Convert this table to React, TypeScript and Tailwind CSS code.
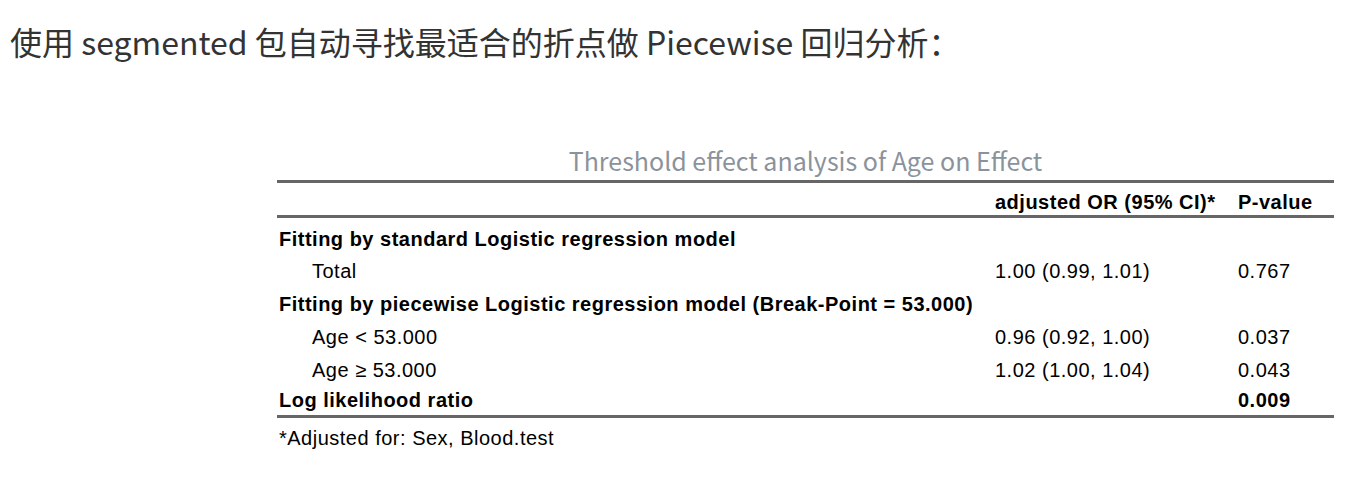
export default function App() {
  const rows = [
    { label: "Fitting by standard Logistic regression model", bold: true },
    { label: "Total", or: "1.00 (0.99, 1.01)", p: "0.767" },
    { label: "Fitting by piecewise Logistic regression model (Break-Point = 53.000)", bold: true },
    { label: "Age < 53.000", or: "0.96 (0.92, 1.00)", p: "0.037" },
    { label: "Age ≥ 53.000", or: "1.02 (1.00, 1.04)", p: "0.043" },
    { label: "Log likelihood ratio", bold: true, p: "0.009" },
  ];
  const rowH = ["h-[37px] pt-[10px] pb-[4px]", "h-[33px]", "h-[33px]", "h-[33px]", "h-[33px]", "h-[29px]"];

  return (
    <div className="w-[1360px] h-[484px] bg-white">
      {/* Heading */}
      <div className="pt-[20px] pl-[10px] text-[32px] leading-[42px] text-[#333] font-['Noto_Sans_CJK_SC',sans-serif]">
        使用 segmented 包自动寻找最适合的折点做 Piecewise 回归分析：
      </div>

      {/* Table */}
      <div className="ml-[277px] mt-[80px] w-[1057px] font-['Liberation_Sans',Arial,sans-serif] text-[20px] tracking-[0.5px] text-black">
        <div className="mb-[2px] text-center text-[25px] leading-[36px] tracking-normal text-[#8a939c] font-['Noto_Sans_CJK_SC',sans-serif]">
          Threshold effect analysis of Age on Effect
        </div>
        <table className="w-full table-fixed border-collapse leading-[23px]">
          <colgroup>
            <col className="w-[716px]" />
            <col className="w-[243px]" />
            <col className="w-[98px]" />
          </colgroup>
          <thead>
            <tr className="border-t-[3px] border-b-[3px] border-[#666] font-bold">
              <th className="h-[35px] pt-[6px] px-[2px] text-left"></th>
              <th className="h-[35px] pt-[6px] px-[2px] text-left">adjusted OR (95% CI)*</th>
              <th className="h-[35px] pt-[6px] px-[2px] text-left">P-value</th>
            </tr>
          </thead>
          <tbody className="border-b-[3px] border-[#666]">
            {rows.map((r, i) => (
              <tr key={i}>
                <td className={`${rowH[i]} ${r.bold ? "px-[2px] font-bold" : "pl-[35px] pr-[2px]"}`}>{r.label}</td>
                <td className={`${rowH[i]} px-[2px]`}>{r.or ?? ""}</td>
                <td className={`${rowH[i]} px-[2px] ${r.bold ? "font-bold" : ""}`}>{r.p ?? ""}</td>
              </tr>
            ))}
          </tbody>
        </table>
        <div className="pl-[2px] pt-[8px] leading-[24px]">*Adjusted for: Sex, Blood.test</div>
      </div>
    </div>
  );
}
